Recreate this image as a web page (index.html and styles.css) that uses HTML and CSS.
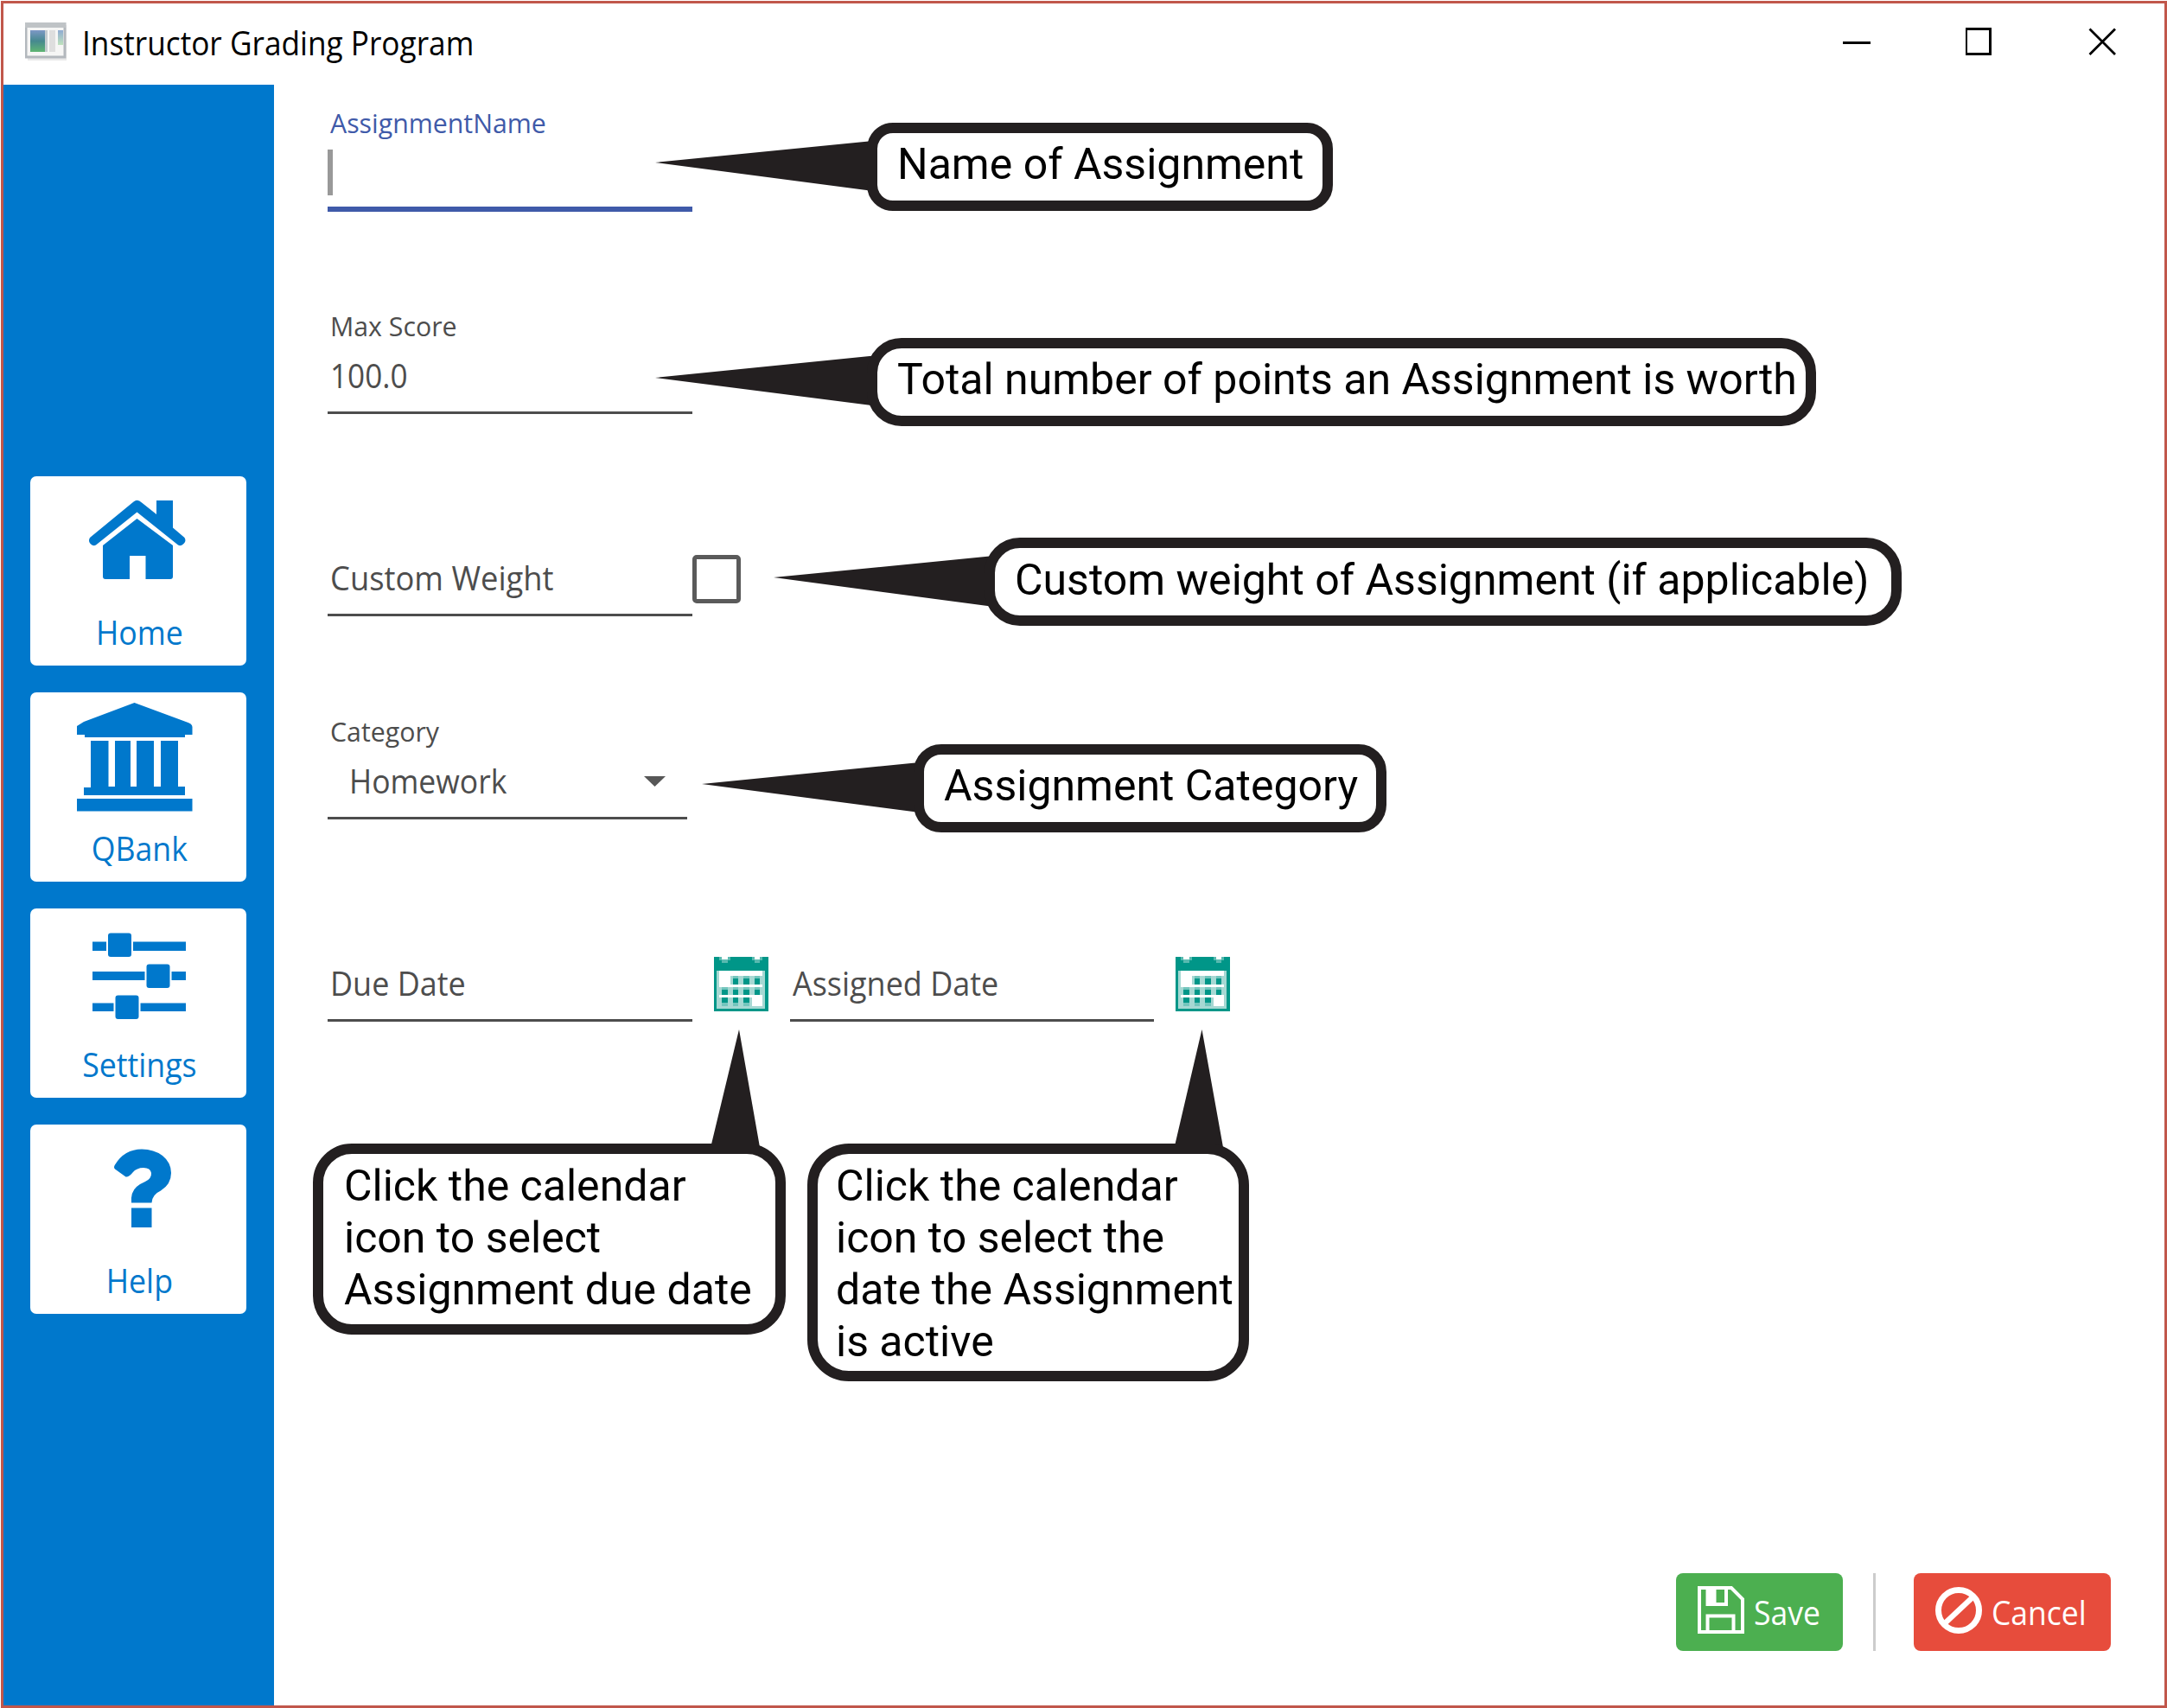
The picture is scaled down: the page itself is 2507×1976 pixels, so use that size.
FILE: index.html
```html
<!DOCTYPE html>
<html lang="en">
<head>
<meta charset="utf-8">
<title>Instructor Grading Program</title>
<link rel="stylesheet" href="styles.css">
</head>
<body>
<div class="window">
  <header class="titlebar">
    <svg class="app-icon" viewBox="0 0 48 45">
      <defs>
        <linearGradient id="pane" x1="0" y1="0" x2="0" y2="1"><stop offset="0" stop-color="#7d98c6"/><stop offset=".5" stop-color="#46898f"/><stop offset="1" stop-color="#5fb573"/></linearGradient>
        <linearGradient id="pane2" x1="0" y1="0" x2="0" y2="1"><stop offset="0" stop-color="#8fabd2"/><stop offset="1" stop-color="#bfe3bd"/></linearGradient>
      </defs>
      <rect x="3" y="3" width="46" height="41" fill="#e9e9e9"/>
      <rect x="1" y="1" width="45" height="39" fill="#f6f6f5" stroke="#b3b8bd" stroke-width="3"/>
      <rect x="0" y="0" width="47" height="6" fill="#bfc3c6"/>
      <rect x="6" y="9" width="17" height="25" fill="url(#pane)"/>
      <rect x="23" y="9" width="3" height="25" fill="#c4cbd0"/>
      <rect x="28" y="9" width="7" height="25" fill="#dedede"/>
      <rect x="38" y="9" width="6" height="17" fill="url(#pane2)"/>
    </svg>
    <span class="title">Instructor Grading Program</span>
    <div class="controls">
      <svg viewBox="0 0 32 32"><path d="M0 17.5H32" stroke="#000" stroke-width="3"/></svg>
      <svg viewBox="0 0 32 32"><rect x="0.500" y="1.5" width="28" height="29" fill="none" stroke="#000" stroke-width="3"/></svg>
      <svg viewBox="0 0 32 32"><path d="M1.500 1.500L31 31M31 1.500L1.500 31" stroke="#000" stroke-width="2.800"/></svg>
    </div>
  </header>
  <div class="body">
    <nav class="sidebar">
      <a class="nav-button">
        <svg viewBox="35 551 250 149"><path d="M154.500 580.500L104 622Q101.500 626 105 629.500Q108 632.500 111 630.500L158.500 592.500L206 630.500Q209 632.500 212 629.500Q216 626 213.500 622L200 610.500V579H181V595L164 581.500Q159 576.500 154.500 580.500ZM158.500 600L119 631V667Q119 670 122 670H150V643H168.500V670H197Q200 670 200 667V631Z"/></svg>
        <span class="home">Home</span>
      </a>
      <a class="nav-button">
        <svg viewBox="35 801 250 149"><path d="M155.500 813L215 835Q222.500 837 222.500 841V850H214V853H98V850H89V840L97 835ZM105 857H125.500V910H133V857H151V910H158V857H178V910H186V857H206V910H214V920H97V911H105ZM89 924H222.500V938.500H89Z"/></svg>
        <span class="qbank">QBank</span>
      </a>
      <a class="nav-button">
        <svg viewBox="35 1051 250 149"><path d="M107 1089.500H215V1100H107ZM107 1124H215V1134H107ZM107 1160.500H215V1170H107Z"/><g stroke="#fff" stroke-width="2"><rect x="124" y="1078.500" width="29" height="29.500" rx="4"/><rect x="168.500" y="1114.500" width="29" height="29.500" rx="4"/><rect x="132.500" y="1150.500" width="29" height="29.500" rx="4"/></g></svg>
        <span class="settings">Settings</span>
      </a>
      <a class="nav-button">
        <svg viewBox="35 1301 250 149"><path d="M133 1347.500Q144 1329.500 164 1329.500Q178 1329.500 188 1337Q198 1345 198 1357Q198 1370 186 1377.500Q176 1382 175.500 1391.500H152Q151 1379 158 1373Q162 1369.500 168 1367Q175.500 1363.500 175 1357Q174 1351 166 1351Q158 1351 153.500 1356.500Q149 1362 145.500 1361.500L133 1352.500Q131 1350.500 133 1347.500ZM152 1397.500H175.500V1420H152Z"/></svg>
        <span class="help">Help</span>
      </a>
    </nav>
    <main class="content">
      <form class="fields">
        <div class="row">
          <div class="field focused"><label>AssignmentName</label><div class="value"><i class="caret"></i></div></div>
        </div>
        <div class="row">
          <div class="field"><label>Max Score</label><div class="value"><span class="v-score">100.0</span></div></div>
        </div>
        <div class="row">
          <div class="field"><label></label><div class="value"><span class="v-custom">Custom Weight</span></div></div>
          <span class="checkbox"></span>
        </div>
        <div class="row">
          <div class="field select"><label>Category</label><div class="value"><span class="v-category">Homework</span><svg class="arrow" viewBox="0 0 25 12"><path d="M0 0H25L12.500 12Z"/></svg></div></div>
        </div>
        <div class="row">
          <div class="field"><label></label><div class="value"><span class="v-date">Due Date</span></div></div>
          <svg class="calendar" viewBox="0 0 63 63"><use href="#cal"/></svg>
          <div class="field assigned"><label></label><div class="value"><span class="v-date">Assigned Date</span></div></div>
          <svg class="calendar" viewBox="0 0 63 63"><defs><g id="cal"><path d="M0 0H63V63H0Z" fill="#009688"/><path d="M3 16H59V60H3Z" fill="#a6d8d3"/><path d="M6 16H56V57H6Z" fill="#fff"/><path d="M6 0H19V4H16V7H9V4H6ZM44 0H56V4H53V7H47V4H44Z" fill="#59bab0"/><path d="M9 0H16V3H9ZM47 0H53V3H47Z" fill="#fff"/><path d="M19 22H56V32H19ZM6 35H56V44H6ZM6 47H44V57H6Z" fill="#a6d8d3"/><path d="M22 22h6v10h-6zM34 22h7v10h-7zM47 22h6v10h-6zM9 35h7v9h-7zM22 35h6v9h-6zM34 35h7v9h-7zM47 35h6v9h-6zM9 47h7v10h-7zM22 47h6v10h-6zM34 47h7v10h-7z" fill="#73c5bd"/><path d="M22 25h6v7h-6zM34 25h7v7h-7zM47 25h6v7h-6zM9 38h7v6h-7zM22 38h6v6h-6zM34 38h7v6h-7zM47 38h6v6h-6zM9 47h7v6h-7zM22 47h6v6h-6zM34 47h7v6h-7z" fill="#009688"/></g></defs><use href="#cal"/></svg>
        </div>
      </form>
      <div class="actions">
        <button class="btn save" type="button">
          <svg viewBox="0 0 55 56"><g fill="none" stroke="#fff"><path d="M2 2H39L52 15V53H2Z" stroke-width="4"/><path d="M11.500 53V34.500H41.500V53" stroke-width="4"/><path d="M11.500 4V21H33V4" stroke-width="4"/></g><path d="M10 4H21.500V22H10Z" fill="#fff"/></svg>
          <span>Save</span>
        </button>
        <i class="divider"></i>
        <button class="btn cancel" type="button">
          <svg viewBox="0 0 55 56"><g fill="none" stroke="#fff" stroke-width="7"><circle cx="27" cy="28" r="23.500"/><path d="M11 43L43 13" stroke-width="6.500"/></g></svg>
          <span>Cancel</span>
        </button>
      </div>
    </main>
  </div>
</div>
<svg class="tails" viewBox="0 0 2507 1976"><path d="M758 188L1010 163V221ZM758 437L1016 411V470ZM895 668L1150 643V702ZM812 907L1064 882V940ZM855 1191L821.500 1330H879.500ZM1390.500 1191L1358 1330H1415.500Z"/></svg>
<div class="callout c1">Name of Assignment</div>
<div class="callout c2">Total number of points an Assignment is worth</div>
<div class="callout c3">Custom weight of Assignment (if applicable)</div>
<div class="callout c4">Assignment Category</div>
<div class="callout c5">Click the calendar<br>icon to select<br>Assignment due date</div>
<div class="callout c6">Click the calendar<br>icon to select the<br>date the Assignment<br>is active</div>
</body>
</html>
```
FILE: styles.css
```css
* { box-sizing: border-box; }

body {
  margin: 0;
  width: 2507px;
  height: 1976px;
  overflow: hidden;
  position: relative;
  background: #fff;
  font: 39px/60px "Open Sans", "Noto Sans", sans-serif;
  color: #4d4d4d;
}

svg { display: block; flex: none; }

.window {
  display: flex;
  flex-direction: column;
  width: 2506px;
  height: 1975px;
  margin: 1px 0 0 1px;
  border: 3px solid #c1574b;
}

/* Title bar */
.titlebar {
  display: flex;
  height: 94px;
  flex: none;
  padding: 22px 56px 0 25px;
}
.app-icon { width: 48px; height: 45px; }
.title {
  margin-left: 18px;
  line-height: 50px;
  margin-top: -2px;
  color: #000;
  white-space: nowrap;
  transform: scaleX(.903);
  transform-origin: 0 0;
}
.controls { display: flex; margin: 6px 0 0 auto; gap: 110px; }
.controls svg { width: 32px; height: 32px; }

/* Sidebar */
.body { display: flex; flex: 1; }
.sidebar {
  display: flex;
  flex-direction: column;
  gap: 31px;
  width: 313px;
  flex: none;
  padding: 453px 32px 0 31px;
  background: #0078cc;
}
.nav-button {
  height: 219px;
  border-radius: 7px;
  background: #fff;
  color: #0078cc;
  text-align: center;
}
.nav-button svg { width: 250px; height: 149px; fill: #0078cc; }
.nav-button span { display: block; padding: 1px 0 0 3px; transform: scaleX(.915); }

/* Form */
.content {
  display: flex;
  flex-direction: column;
  flex: 1;
  padding: 24px 62px 63px;
}
.fields {
  display: grid;
  grid-template-rows: 235px 234px 235px 234px 235px;
}
.row { display: flex; align-items: flex-start; white-space: nowrap; }
.field { width: 422px; flex: none; }
.field label {
  display: block;
  height: 40px;
  padding-left: 3px;
  font-size: 30.3px;
  line-height: 42px;
}
.value {
  display: flex;
  height: 82px;
  padding: 6px 0 0 3px;
  border-bottom: 3px solid #4d4d4d;
}
.value span { height: 60px; line-height: 61px; transform-origin: 0 0; }
.v-score { transform: scaleX(.9); }
.v-custom { transform: scaleX(.932); }
.v-category { transform: translateX(1px) scaleX(.91); }
.v-date { transform: scaleX(.922); }
.focused label { color: #3f5aa9; }
.focused .value { height: 83px; padding: 11px 0 0; border-bottom: 6px solid #3f5aa9; }
.caret { width: 6px; height: 53px; background: #999; }
.select { width: 416px; }
.select .value { padding-left: 24px; }
.arrow { width: 25px; height: 12px; margin: 26px 25px 0 auto; fill: #575757; }
.checkbox {
  width: 56px;
  height: 56px;
  margin-top: 51px;
  border: 5px solid #5a5a5a;
  border-radius: 5px;
}
.assigned { width: 421px; }
.calendar { width: 63px; height: 63px; margin: 47px 25px 0; }

/* Footer actions */
.actions { display: flex; justify-content: flex-end; height: 90px; margin-top: auto; }
.btn {
  display: flex;
  height: 90px;
  padding: 15px 0 0 25px;
  border: 0;
  border-radius: 8px;
  font: inherit;
  color: #fff;
  text-align: left;
}
.btn svg { width: 55px; height: 56px; }
.btn span { margin-left: 10px; transform: scaleX(.91); transform-origin: 0 0; }
.save { width: 193px; background: #4caf50; }
.cancel { width: 228px; background: #e74c3c; }
.divider { width: 3px; margin: 0 44px 0 35px; background: #ccc; }

/* Annotations over the window */
.tails { position: absolute; left: 0; top: 0; width: 2507px; height: 1976px; fill: #231f20; }
.callout {
  position: absolute;
  padding: 6px 0 0 23px;
  border: 12px solid #231f20;
  background: #fff;
  font: 50px/60px Roboto, sans-serif;
  color: #000;
  white-space: nowrap;
}
.c1 { left: 1003px; top: 142px; width: 539px; height: 102px; border-radius: 30px; }
.c2 { left: 1003px; top: 391px; width: 1098px; height: 102px; border-radius: 40px; }
.c3 { left: 1139px; top: 622px; width: 1061px; height: 102px; padding-top: 7px; border-radius: 41px; }
.c4 { left: 1057px; top: 861px; width: 547px; height: 102px; border-radius: 32px; }
.c5 { left: 362px; top: 1323px; width: 547px; height: 221px; padding: 7px 0 0 24px; border-radius: 45px; }
.c6 { left: 934px; top: 1323px; width: 511px; height: 275px; padding: 7px 0 0 21px; border-radius: 48px; }
```
